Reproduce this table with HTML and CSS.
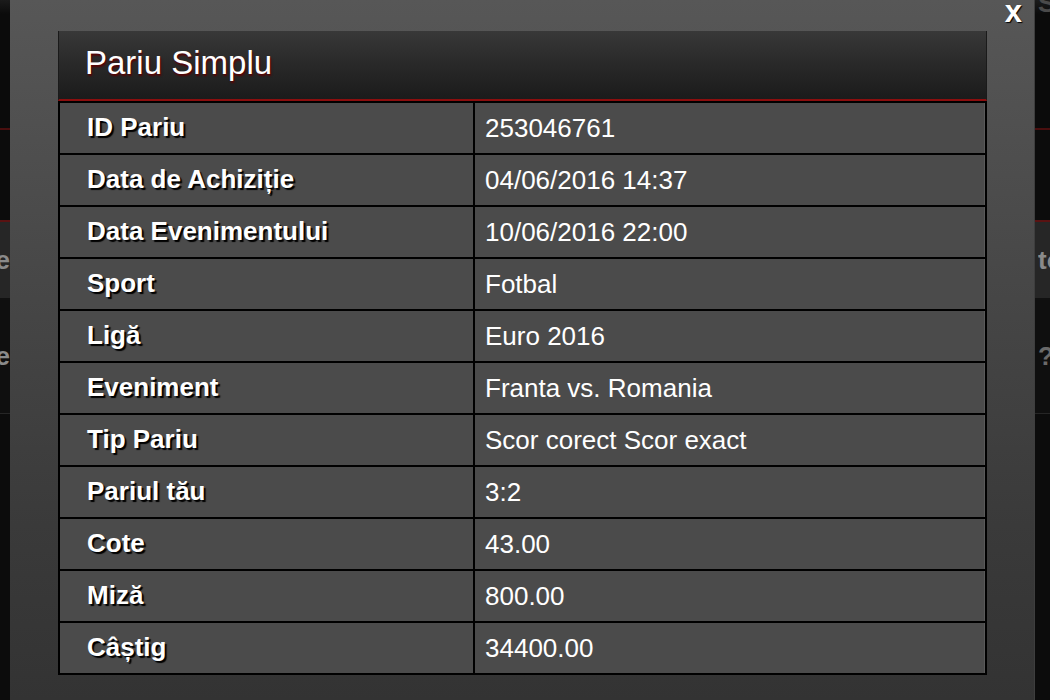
FILE: index.html
```html
<!DOCTYPE html>
<html lang="ro">
<head>
<meta charset="utf-8">
<title>Pariu Simplu</title>
<link rel="stylesheet" href="styles.css">
</head>
<body>
<div class="page">
  <div class="band band-top"><span class="edge-l"></span><span class="edge-r ghost-top">Sel</span></div>
  <div class="band band-mid"></div>
  <div class="band band-light"><span class="edge-l ghost">Confirmare</span><span class="edge-r ghost">tot</span></div>
  <div class="band band-dark"><span class="edge-l ghost">Re</span><span class="edge-r ghost dim">?</span></div>
  <div class="band band-rest"></div>
</div>

<div class="modal">
  <button class="close" type="button">x</button>
  <div class="bet">
    <h1 class="bet-title">Pariu Simplu</h1>
    <div class="bet-rows">
      <div class="label">ID Pariu</div><div class="value">253046761</div>
      <div class="label">Data de Achiziție</div><div class="value">04/06/2016 14:37</div>
      <div class="label">Data Evenimentului</div><div class="value">10/06/2016 22:00</div>
      <div class="label">Sport</div><div class="value">Fotbal</div>
      <div class="label">Ligă</div><div class="value">Euro 2016</div>
      <div class="label">Eveniment</div><div class="value">Franta vs. Romania</div>
      <div class="label">Tip Pariu</div><div class="value">Scor corect Scor exact</div>
      <div class="label">Pariul tău</div><div class="value">3:2</div>
      <div class="label">Cote</div><div class="value">43.00</div>
      <div class="label">Miză</div><div class="value">800.00</div>
      <div class="label">Câștig</div><div class="value">34400.00</div>
    </div>
  </div>
</div>
</body>
</html>
```
FILE: styles.css
```css
html, body {
  margin: 0;
  padding: 0;
  width: 1050px;
  height: 700px;
  overflow: hidden;
  background: #0d0d0d;
  font-family: "Liberation Sans", Arial, sans-serif;
}

.page {
  display: flex;
  flex-direction: column;
  height: 700px;
}

.band {
  display: flex;
  justify-content: space-between;
  align-items: center;
  box-sizing: border-box;
}
.band-top {
  height: 130px;
  background: linear-gradient(#1b1b1b 0, #0b0b0b 14px, #0b0b0b 100%);
  border-bottom: 2px solid #4a0f0f;
  align-items: flex-start;
}
.band-mid {
  height: 92px;
  background: #0c0c0c;
  border-bottom: 2px solid #5a1212;
}
.band-light {
  height: 78px;
  background: #262626;
  border-bottom: 2px solid #111;
}
.band-dark {
  height: 114px;
  background: #0f0f0f;
  border-bottom: 1px solid #262626;
}
.band-rest {
  flex: 1;
  background: #0c0c0c;
}

.edge-l, .edge-r {
  overflow: hidden;
  white-space: nowrap;
}
.edge-l {
  width: 10px;
  direction: rtl;
}
.edge-r {
  width: 12px;
}
.ghost {
  color: #8a8a8a;
  font-size: 26px;
  font-weight: bold;
}
.dim {
  color: #6a6a6a;
  padding-left: 2px;
}
.ghost-top {
  color: #4a4a4a;
  font-size: 26px;
  font-weight: bold;
  margin-top: -12px;
  padding-left: 4px;
}

.modal {
  position: absolute;
  left: 10px;
  top: 0;
  width: 1025px;
  height: 700px;
  box-sizing: border-box;
  background: linear-gradient(#575757 0, #474747 40%, #3a3a3a 75%, #333 100%);
  border-right: 1px solid #3e3e3e;
  padding: 31px 0 0 48px;
}

.close {
  position: absolute;
  right: 12px;
  top: -3px;
  background: none;
  border: 0;
  padding: 0;
  color: #fff;
  font-family: "Liberation Sans", Arial, sans-serif;
  font-size: 31px;
  font-weight: bold;
  line-height: 30px;
  text-shadow: 1px 1px 1px #000;
  cursor: pointer;
}

.bet {
  width: 929px;
}

.bet-title {
  margin: 0;
  height: 70px;
  box-sizing: border-box;
  padding: 12px 0 0 26px;
  background: linear-gradient(#383838 0, #2a2a2a 45%, #1b1b1b 100%);
  border-left: 1px solid #1a1a1a;
  border-right: 1px solid #1a1a1a;
  border-bottom: 2px solid #8c0e0e;
  color: #fff;
  font-size: 33px;
  font-weight: normal;
  line-height: 40px;
  text-shadow: 1px 2px 2px #5c0000;
}

.bet-rows {
  display: grid;
  grid-template-columns: 413px 1fr;
  grid-auto-rows: 50px;
  gap: 2px;
  background: #000;
  border: 2px solid #000;
}

.label, .value {
  display: flex;
  align-items: center;
  background: #4b4b4b;
  color: #fff;
  font-size: 26px;
  line-height: 30px;
}
.label {
  padding: 0 0 3px 27px;
  font-weight: bold;
  text-shadow: 2px 2px 1px #000;
}
.value {
  padding: 0 0 0 10px;
  box-shadow: inset -1px 0 0 #5a5a5a;
}
```
